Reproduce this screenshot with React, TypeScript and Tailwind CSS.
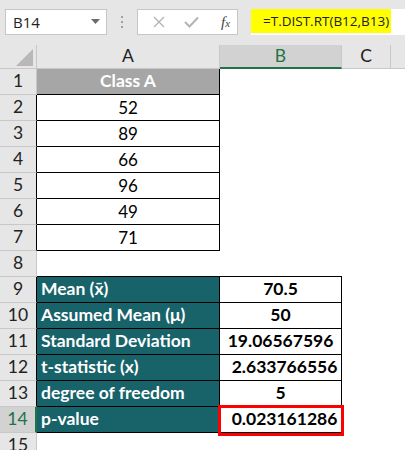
import React from "react";

type Kind = "head" | "num" | "empty" | "stat";
interface RowDef {
  n: number;
  kind: Kind;
  a?: string;
  b?: string;
  shift?: boolean;
}

const rows: RowDef[] = [
  { n: 1, kind: "head", a: "Class A" },
  { n: 2, kind: "num", a: "52" },
  { n: 3, kind: "num", a: "89" },
  { n: 4, kind: "num", a: "66" },
  { n: 5, kind: "num", a: "96" },
  { n: 6, kind: "num", a: "49" },
  { n: 7, kind: "num", a: "71" },
  { n: 8, kind: "empty" },
  { n: 9, kind: "stat", a: "Mean (x̄)", b: "70.5" },
  { n: 10, kind: "stat", a: "Assumed Mean (μ)", b: "50" },
  { n: 11, kind: "stat", a: "Standard Deviation", b: "19.06567596" },
  { n: 12, kind: "stat", a: "t-statistic (x)", b: "2.633766556", shift: true },
  { n: 13, kind: "stat", a: "degree of freedom", b: "5" },
  { n: 14, kind: "stat", a: "p-value", b: "0.023161286", shift: true },
  { n: 15, kind: "empty" },
];

function Row({ r }: { r: RowDef }) {
  const selected = r.n === 14;
  const dataLeft = r.kind === "num" || r.kind === "stat";
  const headerCls = selected
    ? "bg-[#d2d2d2] text-[#217346] border-r-2 border-r-[#217346]"
    : dataLeft
    ? "bg-[#e6e6e6] text-[#222] border-r border-r-black"
    : "bg-[#e6e6e6] text-[#222] border-r border-r-[#c8c8c8]";

  let aCls = "";
  let bCls = "";
  if (r.kind === "head") {
    aCls = "bg-[#a6a6a6] text-white font-bold justify-center border-r border-b border-black text-[17.5px]";
    bCls = "bg-white";
  } else if (r.kind === "num") {
    aCls = "bg-white text-black justify-center border-r border-b border-black text-[17px]";
    bCls = "bg-white";
  } else if (r.kind === "stat") {
    aCls = "bg-[#18626a] text-white font-bold justify-start pl-[4px] border-r border-b border-black text-[17.5px]";
    bCls = "bg-white text-black font-bold justify-center border-r border-b border-black text-[17.5px]";
  } else if (r.n === 8) {
    aCls = "bg-white border-b border-black";
    bCls = "bg-white border-b border-black";
  } else {
    aCls = "bg-white";
    bCls = "bg-white";
  }

  return (
    <div className="flex h-[26px]">
      <div
        className={`w-[37px] shrink-0 h-full flex items-center justify-center border-b border-b-[#c8c8c8] text-[17.5px] ${headerCls}`}
      >
        {r.n}
      </div>
      <div className={`w-[183px] shrink-0 h-full flex items-center ${aCls}`}>{r.a}</div>
      <div
        className={`w-[122px] shrink-0 h-full flex items-center ${bCls} ${
          r.shift ? "pl-[8px]" : ""
        }`}
      >
        {r.b}
      </div>
      <div className="flex-1 h-full bg-white" />
    </div>
  );
}

export default function App() {
  return (
    <div className="relative w-[405px] h-[450px] overflow-hidden bg-white font-[Lato,'Noto_Sans',sans-serif] text-[#222]">
      {/* Formula toolbar */}
      <div className="h-[45px] bg-[#e6e6e6] flex items-start pt-[9px]">
        <div className="ml-[5px] w-[102px] h-[26px] bg-white border border-[#c6c6c6] flex items-center pl-[7px] pr-[6px] font-['Open_Sans',sans-serif] text-[15px] text-[#222]">
          <span className="flex-1">B14</span>
          <svg width="9" height="6" viewBox="0 0 9 6">
            <path d="M0 0 L9 0 L4.5 5 Z" fill="#6b6b6b" />
          </svg>
        </div>
        <div className="w-[30px] h-[26px] flex flex-col items-center justify-center gap-[3px]">
          <div className="w-[2px] h-[2px] bg-[#a0a0a0]" />
          <div className="w-[2px] h-[2px] bg-[#a0a0a0]" />
          <div className="w-[2px] h-[2px] bg-[#a0a0a0]" />
        </div>
        <div className="w-[101px] h-[26px] bg-white border border-[#c6c6c6] flex items-center">
          <div className="w-[38px] flex justify-center pl-[3px]">
            <svg width="12" height="12" viewBox="0 0 12 12">
              <path d="M1 1 L11 11 M11 1 L1 11" stroke="#b4b4b4" strokeWidth="1.4" />
            </svg>
          </div>
          <div className="w-[30px] flex justify-center">
            <svg width="15" height="12" viewBox="0 0 15 12">
              <path d="M1 6 L5.5 10.5 L14 1.5" stroke="#b4b4b4" strokeWidth="2" fill="none" />
            </svg>
          </div>
          <div className="flex-1 flex justify-center pl-[8px]">
            <span className="font-['Liberation_Serif',serif] italic text-[15px] text-[#444] leading-none">
              f<span className="text-[11px]">x</span>
            </span>
          </div>
        </div>
        <div className="ml-[13px] flex-1 h-[26px] bg-white flex items-start">
          <div className="w-[140px] h-[24px] bg-[#ffff00] flex items-center pl-[12px] font-['Open_Sans',sans-serif] text-[13.5px] text-[#222] whitespace-nowrap">
            =T.DIST.RT(B12,B13)
          </div>
        </div>
      </div>

      {/* Column headers */}
      <div className="flex h-[24px] bg-[#e6e6e6] text-[17.5px]">
        <div className="w-[37px] shrink-0 h-full border-r border-b border-[#c8c8c8] relative">
          <svg className="absolute left-[16px] top-[4px]" width="17" height="17" viewBox="0 0 17 17">
            <path d="M17 0 L17 17 L0 17 Z" fill="#b8b8b8" />
          </svg>
        </div>
        <div className="w-[183px] shrink-0 h-full flex items-center justify-center border-r border-b border-[#c8c8c8]">
          A
        </div>
        <div className="w-[122px] shrink-0 h-full flex items-center justify-center bg-[#d2d2d2] text-[#217346] border-r border-r-[#c8c8c8] border-b-2 border-b-[#217346]">
          B
        </div>
        <div className="w-[49px] shrink-0 h-full flex items-center justify-center border-r border-b border-[#c8c8c8]">
          C
        </div>
        <div className="flex-1 h-full border-b border-[#c8c8c8]" />
      </div>

      {rows.map((r) => (
        <Row key={r.n} r={r} />
      ))}

      {/* Red highlight box */}
      <div className="absolute left-[218px] top-[405px] w-[126px] h-[31px] border-[3px] border-[#ff0000] pointer-events-none" />
    </div>
  );
}
